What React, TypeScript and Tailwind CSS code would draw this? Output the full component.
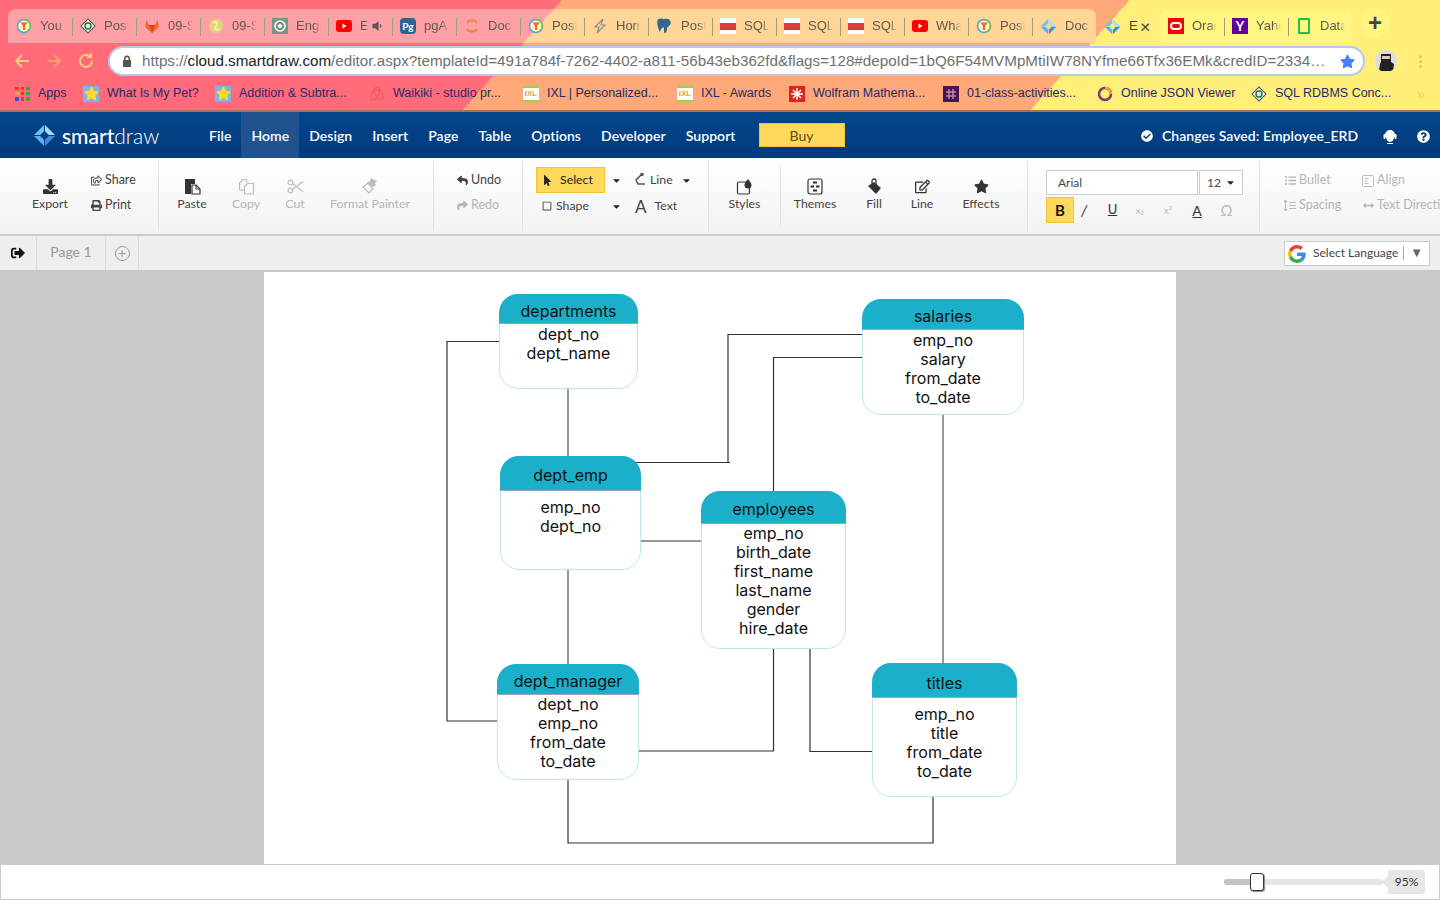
import React from 'react'
import {
  FaDownload, FaRegShareSquare, FaPrint, FaReply, FaShare,
  FaMousePointer, FaRegSquare, FaStar, FaRegEdit, FaCheckCircle, FaQuestionCircle,
  FaCaretDown, FaSignOutAlt, FaListUl, FaArrowsAltH, FaVolumeDown,
} from 'react-icons/fa'

function Fav({ kind }: { kind: string }) {
  if (kind === 'post') {
    return (
      <svg width="16" height="16" viewBox="0 0 16 16" className="shrink-0">
        <circle cx="8" cy="8" r="6.5" fill="#fff3c0" stroke="#4aa6d8" strokeWidth="1.5" />
        <path d="M8 1.500a6.500 6.500 0 0 1 6.500 6.500 6.500 6.500 0 0 1-3 5.500" fill="none" stroke="#7cc24a" strokeWidth="1.5" />
        <path d="M4.500 4.500h7L9 8v4H7V8z" fill="#f0663a" />
      </svg>
    )
  }
  if (kind === 'rdbms') {
    return (
      <svg width="16" height="16" viewBox="0 0 16 16" className="shrink-0">
        <rect x="3" y="3" width="10" height="10" transform="rotate(45 8 8)" fill="#e8f2e8" stroke="#44604a" />
        <circle cx="8" cy="8" r="3" fill="none" stroke="#2f6f46" strokeWidth="1.4" />
      </svg>
    )
  }
  if (kind === 'gitlab') {
    return (
      <svg width="16" height="16" viewBox="0 0 16 16" className="shrink-0">
        <path d="M8 15 1 9l1.500-7L5 7h6l2.500-5L15 9z" fill="#f0662a" />
        <path d="M8 15 5 7h6z" fill="#e2432a" />
      </svg>
    )
  }
  if (kind === 'gitlabFade') {
    return (
      <svg width="16" height="16" viewBox="0 0 16 16" className="shrink-0">
        <circle cx="8" cy="8" r="7" fill="#e3d47a" />
        <path d="M5 5c3-2 6 0 3 3s0 5 3 3" fill="none" stroke="#f5eeb0" strokeWidth="2" />
      </svg>
    )
  }
  if (kind === 'target') {
    return (
      <svg width="16" height="16" viewBox="0 0 16 16" className="shrink-0">
        <rect width="16" height="16" fill="#7b9484" />
        <circle cx="8" cy="8" r="5" fill="none" stroke="#fff" strokeWidth="1.5" />
        <circle cx="8" cy="8" r="2" fill="#fff" />
      </svg>
    )
  }
  if (kind === 'yt') {
    return (
      <svg width="16" height="16" viewBox="0 0 16 16" className="shrink-0">
        <rect y="2" width="16" height="12" rx="3" fill="#f00" />
        <path d="M6.500 5.500v5l4-2.500z" fill="#fff" />
      </svg>
    )
  }
  if (kind === 'pg') {
    return <span className="w-4 h-4 shrink-0 rounded-sm bg-[#2b6598] text-white text-[10px] leading-4 text-center font-bold">Pg</span>
  }
  if (kind === 'doc') {
    return (
      <svg width="16" height="16" viewBox="0 0 16 16" className="shrink-0">
        <path d="M3 5a6 6 0 0 1 10 0" fill="none" stroke="#f47b20" strokeWidth="1.500" />
        <path d="M3 11a6 6 0 0 0 10 0" fill="none" stroke="#f47b20" strokeWidth="1.500" />
      </svg>
    )
  }
  if (kind === 'bolt') {
    return (
      <svg width="16" height="16" viewBox="0 0 16 16" className="shrink-0">
        <path d="M11 1 3 9h4l-2 6 8-8H9z" fill="none" stroke="#8a8f8a" strokeWidth="1.200" />
      </svg>
    )
  }
  if (kind === 'elephant') {
    return (
      <svg width="18" height="18" viewBox="0 0 16 16" className="shrink-0 -ml-px">
        <path d="M2 4c0-3 4-3 6-2 3-1 6 0 6 3 0 2-2 3-3 4l-1 5H8V9C5 9 5 13 4 13 3 11 2 7 2 4z" fill="#336791" />
      </svg>
    )
  }
  if (kind === 'w3') {
    return (
      <span className="w-4 h-4 shrink-0 bg-white flex items-center justify-center">
        <span className="w-4 h-[7px] bg-[#e23b3b]" />
      </span>
    )
  }
  if (kind === 'sd') return <Logo size={17} />
  if (kind === 'oracle') {
    return (
      <span className="w-4 h-4 shrink-0 bg-[#f80000] flex items-center justify-center">
        <span className="w-3 h-2 rounded-full border-2 border-white" />
      </span>
    )
  }
  if (kind === 'yahoo') {
    return <span className="w-4 h-4 shrink-0 bg-[#5f01a0] text-white text-[13px] leading-4 text-center font-bold">Y</span>
  }
  if (kind === 'data') {
    return <span className="w-3 h-4 shrink-0 mx-0.5 border-2 border-[#22c04a] rounded-[1px]" />
  }
  return null
}

function Logo({ size }: { size: number }) {
  return (
    <svg width={size} height={size} viewBox="0 0 24 24" className="shrink-0">
      <path d="M11.500 1 1 11.500h6.500l4-4z" fill="#6cc4f4" />
      <path d="M12.500 1 23 11.500h-6.500l-4-4z" fill="#a4e0fa" />
      <path d="M1 12.500h6.500l4 4V23z" fill="#5ab0ea" />
      <path d="M23 12.500h-6.500l-4 4V23z" fill="#3a90d8" />
    </svg>
  )
}

const tabsA = [
  ['post', 'You'], ['rdbms', 'Post'], ['gitlab', '09-S'], ['gitlabFade', '09-S'], ['target', 'Engi'], ['yt', 'E'],
  ['pg', 'pgA'], ['doc', 'Doc'], ['post', 'Post'], ['bolt', 'Hom'], ['elephant', 'Post'], ['w3', 'SQL'],
  ['w3', 'SQL'], ['w3', 'SQL'], ['yt', 'Wha'], ['post', 'Post'], ['sd', 'Doc'],
]
const tabsB = [['oracle', 'Orac'], ['yahoo', 'Yaho'], ['data', 'Data']]

function Tab({ kind, label, sound, last }: { kind: string; label: string; sound?: boolean; last?: boolean }) {
  return (
    <div className="w-16 h-full flex items-center pl-2 relative">
      <Fav kind={kind} />
      <span className={`ml-2 ${sound ? 'w-[8px]' : 'w-[25px]'} overflow-hidden whitespace-nowrap text-[13px] text-[#5f5a50] font-['Liberation_Sans',sans-serif] [mask-image:linear-gradient(90deg,#000_70%,transparent)]`}>{label}</span>
      {sound && <FaVolumeDown className="text-[12px] text-[#555] absolute left-[43px]" />}
      {!last && <span className="absolute right-[-1px] top-[9px] bottom-[7px] w-px bg-[#a09c78]" />}
    </div>
  )
}

const bookmarks = [
  { w: 'w-[68px]', text: 'Apps', icon: 'apps' },
  { w: 'w-[132px]', text: 'What Is My Pet?', icon: 'star' },
  { w: 'w-[154px]', text: 'Addition & Subtra...', icon: 'star' },
  { w: 'w-[154px]', text: 'Waikiki - studio pr...', icon: 'air' },
  { w: 'w-[154px]', text: 'IXL | Personalized...', icon: 'ixl' },
  { w: 'w-[112px]', text: 'IXL - Awards', icon: 'ixl' },
  { w: 'w-[154px]', text: 'Wolfram Mathema...', icon: 'wolf' },
  { w: 'w-[154px]', text: '01-class-activities...', icon: 'slack' },
  { w: 'w-[154px]', text: 'Online JSON Viewer', icon: 'json' },
  { w: 'w-[154px]', text: 'SQL RDBMS Conc...', icon: 'rdbms' },
]

function BookmarkIcon({ icon }: { icon: string }) {
  if (icon === 'apps') {
    return (
      <span className="w-[15px] h-[14px] shrink-0 grid grid-cols-3 gap-[2px]">
        {['#e33', '#e33', '#3a3', '#ea3', '#e33', '#3a3', '#35d', '#e33', '#3a3'].map((c, i) => (
          <span key={i} style={{ backgroundColor: c }} />
        ))}
      </span>
    )
  }
  if (icon === 'star') {
    return (
      <span className="w-4 h-4 shrink-0 bg-[#7fb4e8] flex items-center justify-center">
        <FaStar className="text-[#ffd92e] text-[15px]" />
      </span>
    )
  }
  if (icon === 'air') {
    return (
      <svg width="16" height="18" viewBox="0 0 16 16" className="shrink-0">
        <path d="M8 11C6.500 9 5.500 7.500 5.500 6a2.500 2.500 0 0 1 5 0c0 1.500-1 3-2.500 5 1.500 2 4 3.500 5.500 2.500S14.500 10 12 5.500 9.500 1 8 1 6.500 1 4 5.500 1 12.500 2.500 13.500 6.500 13 8 11z" fill="none" stroke="#f0585f" strokeWidth="1.100" />
      </svg>
    )
  }
  if (icon === 'ixl') {
    return <span className="w-4 h-4 shrink-0 bg-white border-y-2 border-[#9ed13c] text-[#e6a31a] text-[8px] leading-3 font-bold text-center">IXL</span>
  }
  if (icon === 'wolf') {
    return (
      <span className="w-4 h-4 shrink-0 bg-[#e2211c] flex items-center justify-center">
        <svg width="12" height="12" viewBox="0 0 12 12">
          <path d="M6 0v12M0 6h12M2 2l8 8M10 2l-8 8" stroke="#fff" strokeWidth="1.500" />
        </svg>
      </span>
    )
  }
  if (icon === 'slack') {
    return (
      <span className="w-4 h-4 shrink-0 bg-[#4a154b] flex items-center justify-center">
        <svg width="12" height="12" viewBox="0 0 12 12">
          <path d="M4 1v10M8 1v10M1 4h10M1 8h10" stroke="#b58ab5" strokeWidth="1.500" />
        </svg>
      </span>
    )
  }
  if (icon === 'json') {
    return (
      <svg width="16" height="16" viewBox="0 0 16 16" className="shrink-0">
        <circle cx="8" cy="8" r="6" fill="none" stroke="#7a3b6e" strokeWidth="2.500" />
        <path d="M8 2a6 6 0 0 1 6 6" fill="none" stroke="#f0a030" strokeWidth="2.500" />
      </svg>
    )
  }
  return <Fav kind="rdbms" />
}

const navItems = ['File', 'Home', 'Design', 'Insert', 'Page', 'Table', 'Options', 'Developer', 'Support']

// ribbon icons that the icon packages don't have in this shape
function PasteIcon() {
  return (
    <svg width="17" height="17" viewBox="0 0 17 17">
      <path d="M1 1h10v5H7v10H1z" fill="#333" />
      <path d="M8 7h4l4 4v5H8z" fill="#fff" stroke="#333" strokeWidth="1.200" />
      <path d="M12 7v4h4" fill="none" stroke="#333" />
    </svg>
  )
}

function CopyIcon() {
  return (
    <svg width="17" height="17" viewBox="0 0 17 17" fill="none" stroke="#bdbdbd" strokeWidth="1.200">
      <path d="M1.500 12V5l3.500-3.500h3.500V5" />
      <path d="M1.500 12h5" />
      <path d="M6.500 16V8.500l3-3h6V16z" />
    </svg>
  )
}

function CutIcon() {
  return (
    <svg width="17" height="15" viewBox="0 0 17 15" fill="none" stroke="#bdbdbd" strokeWidth="1.200">
      <circle cx="3.500" cy="3.500" r="2.400" />
      <circle cx="3.500" cy="11.500" r="2.400" />
      <path d="M5.500 4.800 16 12.500M5.500 10.200 16 2.500" />
    </svg>
  )
}

function PainterIcon() {
  return (
    <svg width="17" height="16" viewBox="0 0 17 16">
      <path d="M1 9l5-4 5 6-4 4z" fill="none" stroke="#bdbdbd" strokeWidth="1.200" />
      <path d="M5 5l3-2 1-3 2 1 1 1 3 1-2 2 1 2-3 2z" fill="#bdbdbd" />
    </svg>
  )
}

function LineIcon() {
  return (
    <svg width="12" height="14" viewBox="0 0 12 14" fill="none" stroke="#555" strokeWidth="1.500">
      <path d="M8 1 2 7l2 4h7" />
      <circle cx="8" cy="1.500" r="1" fill="#555" />
    </svg>
  )
}

function StylesIcon() {
  return (
    <svg width="17" height="17" viewBox="0 0 17 17">
      <path d="M10 4H3a1.500 1.500 0 0 0-1.500 1.500v9A1.500 1.500 0 0 0 3 16h9a1.500 1.500 0 0 0 1.500-1.500V10" fill="none" stroke="#333" strokeWidth="1.200" />
      <path d="M12 1c1.500 2 3.500 4 3.500 6a3.500 3.500 0 0 1-7 0c0-2 2-4 3.500-6z" fill="#333" />
    </svg>
  )
}

function ThemesIcon() {
  return (
    <svg width="16" height="17" viewBox="0 0 16 17">
      <rect x="1" y="1" width="14" height="15" rx="2" fill="none" stroke="#333" strokeWidth="1.200" />
      <path d="M6 3.500h4v2H6zM3.500 7.500h3.500v2H3.500zM9 7.500h3.500v2H9zM6 11.500h4v2H6z" fill="#333" />
    </svg>
  )
}

function FillIcon() {
  return (
    <svg width="15" height="17" viewBox="0 0 15 17">
      <path d="M1 8l6-4 7 6-5 6z" fill="#333" />
      <path d="M5 7V3a2 2 0 0 1 4 0v4" fill="none" stroke="#333" strokeWidth="1.300" />
    </svg>
  )
}

function AlignIcon() {
  return (
    <svg width="12" height="12" viewBox="0 0 12 12" fill="none" stroke="#bdbdbd">
      <rect x="0.500" y="0.500" width="11" height="11" rx="1" />
      <path d="M2.500 3.500h4M2.500 6h3M2.500 8.500h4" />
    </svg>
  )
}

function SpacingIcon() {
  return (
    <svg width="12" height="11" viewBox="0 0 12 11" fill="none" stroke="#bdbdbd" strokeWidth="1.200">
      <path d="M1.500 0v11M0 2l1.500-2L3 2M0 9l1.500 2L3 9M5 2.500h7M5 5.500h7M5 8.500h7" />
    </svg>
  )
}

function HeadsetIcon() {
  return (
    <svg width="14" height="16" viewBox="0 0 14 16" fill="#fff">
      <path d="M2 7a5 5 0 0 1 10 0v2h-1.500V7a3.500 3.500 0 0 0-7 0v2H2z" />
      <ellipse cx="7" cy="8" rx="4.200" ry="6" />
      <rect x="0.500" y="6" width="2" height="5" rx="1" />
      <rect x="11.500" y="6" width="2" height="5" rx="1" />
      <path d="M4 15h6v1H4z" />
    </svg>
  )
}

function RibbonItem({ w, icon, label, off }: { w: string; icon: React.ReactNode; label: string; off?: boolean }) {
  return (
    <div className={`${w} flex flex-col items-center pt-[19px] ${off ? 'text-[#b5b5b5]' : 'text-[#444]'}`}>
      <span className="h-[18px] flex items-center text-[15px] text-[#333]">{icon}</span>
      <span className="mt-[1px] text-[12.3px] leading-4 whitespace-nowrap">{label}</span>
    </div>
  )
}

function SmallItem({ icon, label, off }: { icon: React.ReactNode; label: string; off?: boolean }) {
  return (
    <div className={`h-[25px] flex items-center gap-[3px] text-[12.5px] whitespace-nowrap ${off ? 'text-[#b5b5b5]' : 'text-[#444]'}`}>
      <span className="w-[12px] flex justify-center text-[11px]">{icon}</span>
      {label}
    </div>
  )
}

function Sep() {
  return <span className="w-px self-stretch my-[3px] bg-[#e2e2e2] shrink-0" />
}

const entities = [
  { name: 'departments', cols: ['dept_no', 'dept_name'], box: 'left-[235px] top-[22px] w-[139px] h-[95px]', head: 'h-[30px] pt-[4px]', pad: 'pt-[1px]' },
  { name: 'salaries', cols: ['emp_no', 'salary', 'from_date', 'to_date'], box: 'left-[598px] top-[27px] w-[162px] h-[116px]', head: 'h-[31px] pt-[3px]', pad: 'pt-[1px]' },
  { name: 'dept_emp', cols: ['emp_no', 'dept_no'], box: 'left-[236px] top-[184px] w-[141px] h-[114px]', head: 'h-[35px] pt-[4px]', pad: 'pt-[7px]' },
  { name: 'employees', cols: ['emp_no', 'birth_date', 'first_name', 'last_name', 'gender', 'hire_date'], box: 'left-[437px] top-[219px] w-[145px] h-[158px]', head: 'h-[33px] pt-[4px]', pad: 'pt-0' },
  { name: 'dept_manager', cols: ['dept_no', 'emp_no', 'from_date', 'to_date'], box: 'left-[233px] top-[392px] w-[142px] h-[116px]', head: 'h-[31px] pt-[3px]', pad: 'pt-0' },
  { name: 'titles', cols: ['emp_no', 'title', 'from_date', 'to_date'], box: 'left-[608px] top-[391px] w-[145px] h-[134px]', head: 'h-[35px] pt-[5px]', pad: 'pt-[7px]' },
]

function Entity({ name, cols, box, head, pad }: { name: string; cols: string[]; box: string; head: string; pad: string }) {
  return (
    <div className={`absolute ${box} rounded-[19px] border border-[#bfe6ee] bg-white font-['Inter',sans-serif] text-base text-center text-[#111]`}>
      <div className={`${head} rounded-t-[19px] bg-[#1cafc9] border-b border-[#9aa8ac] flex items-center justify-center -mx-px -mt-px`}>{name}</div>
      <div className={`${pad} leading-[19px]`}>
        {cols.map(c => (
          <div key={c}>{c}</div>
        ))}
      </div>
    </div>
  )
}

export default function App() {
  return (
    <div className="w-[1440px] h-[900px] overflow-hidden flex flex-col font-['Lato',sans-serif]">
      {/* browser frame */}
      <div className="h-[112px] shrink-0 border-b-2 border-[#a8705a] bg-[linear-gradient(132deg,#ff6b78_36.5%,#ffa878_36.5%,#ffa878_73.4%,#ffee78_73.4%)]">
        <div className="h-[43px] pt-[9px] flex items-stretch">
          <div className="ml-2 flex rounded-t-lg h-[34px] bg-[linear-gradient(132deg,#ff9fa6_48.8%,#ffd598_48.8%)]">
            {tabsA.map(([kind, label], i) => (
              <Tab key={i} kind={kind} label={label} sound={i === 5} last={i === 16} />
            ))}
          </div>
          <div className="w-16 h-[34px] flex items-center pl-2 relative">
            <Fav kind="sd" />
            <span className="ml-2 text-[13px] text-[#444] font-['Liberation_Sans',sans-serif]">E</span>
            <span className="absolute left-[44px] text-lg leading-none text-[#444]">×</span>
          </div>
          <div className="flex rounded-t-lg h-[34px] bg-[#fff580]">
            {tabsB.map(([kind, label], i) => (
              <Tab key={i} kind={kind} label={label} last={i === 2} />
            ))}
          </div>
          <div className="ml-2 mt-[-1px] w-[30px] h-[30px] rounded-full bg-[#fff580] flex items-center justify-center text-[24px] leading-none font-bold text-[#444] font-['Liberation_Sans',sans-serif]">+</div>
        </div>
        <div className="h-[36px] flex items-center">
          <div className="w-[108px] flex items-center pl-[13px] gap-[14px] text-[#ffce7a]">
            <svg width="18" height="18" viewBox="0 0 18 18" fill="none" stroke="currentColor" strokeWidth="2"><path d="M16 9H3M9 3 3 9l6 6" /></svg>
            <svg width="18" height="18" viewBox="0 0 18 18" fill="none" stroke="#ffa06e" strokeWidth="2"><path d="M2 9h13M9 3l6 6-6 6" /></svg>
            <svg width="18" height="18" viewBox="0 0 18 18" fill="none" stroke="currentColor" strokeWidth="2"><path d="M15 9a6 6 0 1 1-2-4.500M14 1v4h-4" /></svg>
          </div>
          <div className="w-[1257px] h-[30px] bg-white rounded-full border-2 border-[#b3c8ea] flex items-center pl-[12px] pr-2 font-['Liberation_Sans',sans-serif] text-[15.2px] text-[#6f6f6f]">
            <svg width="10" height="12" viewBox="0 0 10 12" className="shrink-0 mr-[10px]"><path d="M2 5V3.500a3 3 0 0 1 6 0V5h1v7H1V5zm1.500 0h3V3.500a1.500 1.500 0 0 0-3 0z" fill="#555" /></svg>
            <span className="whitespace-nowrap overflow-hidden w-[1188px]">
              https://<span className="text-[#222]">cloud.smartdraw.com</span>/editor.aspx?templateId=491a784f-7262-4402-a811-56b43eb362fd&amp;flags=128#depoId=1bQ6F54MVMpMtiIW78NYfme66Tfx36EMk&amp;credID=2334…
            </span>
            <FaStar className="ml-auto text-[#4a80f0] text-[15px] shrink-0" />
          </div>
          <div className="ml-[10px] w-[22px] h-[22px] rounded-full bg-[#dedede] flex items-center justify-center overflow-hidden">
            <svg width="16" height="20" viewBox="0 0 16 20">
              <path d="M3 3h10v8l3 2-1 7H1l1-7 1-2z" fill="#222" />
              <rect x="4" y="5" width="8" height="3" fill="#e8c8a8" />
            </svg>
          </div>
          <div className="ml-[22px] flex flex-col gap-[2px]">
            <span className="w-[3px] h-[3px] rounded-full bg-[#e3c75a]" />
            <span className="w-[3px] h-[3px] rounded-full bg-[#e3c75a]" />
            <span className="w-[3px] h-[3px] rounded-full bg-[#e3c75a]" />
          </div>
        </div>
        <div className="h-[29px] flex items-center pl-[15px] font-['Liberation_Sans',sans-serif] text-[12.5px] text-[#1d2a70]">
          {bookmarks.map(b => (
            <div key={b.text} className={`${b.w} flex items-center gap-2 whitespace-nowrap`}>
              <BookmarkIcon icon={b.icon} />
              {b.text}
            </div>
          ))}
          <span className="ml-[12px] text-[#e8cf68] text-sm">»</span>
        </div>
      </div>

      {/* app menu */}
      <div className="h-[46px] shrink-0 bg-[linear-gradient(180deg,#04468c,#023a7c)] flex items-stretch text-white text-sm font-semibold tracking-[0.05px]">
        <div className="w-[199px] flex items-center pl-[33px] gap-[6px] tracking-normal">
          <Logo size={23} />
          <span className="text-[21px] leading-none font-medium">smart<span className="font-light">draw</span></span>
        </div>
        {navItems.map(n => (
          <div key={n} className={`flex items-center px-2.5 pt-[2px] ${n === 'Home' ? 'bg-[#20528f]' : ''}`}>{n}</div>
        ))}
        <div className="ml-[13px] my-[11px] w-[86px] pt-[2px] bg-[#ffd95c] border border-[#f6c233] text-[#5a4a12] font-normal flex items-center justify-center">Buy</div>
        <div className="ml-auto flex items-center pt-[2px]">
          <FaCheckCircle className="text-[12px] mr-[9px]" />
          <span className="w-[221px]">Changes Saved: Employee_ERD</span>
          <HeadsetIcon />
          <FaQuestionCircle className="text-[13px] ml-[20px] mr-[10px]" />
        </div>
      </div>

      {/* ribbon */}
      <div className="h-[78px] shrink-0 bg-[linear-gradient(180deg,#ffffff,#f2f2f2)] border-b-2 border-[#c9c9c9] flex items-stretch overflow-hidden">
        <div className="w-[158px] flex shrink-0">
          <RibbonItem w="w-[100px]" icon={<FaDownload />} label="Export" />
          <div className="pt-[10px] -ml-[10px]">
            <SmallItem icon={<FaRegShareSquare />} label="Share" />
            <SmallItem icon={<FaPrint />} label="Print" />
          </div>
        </div>
        <Sep />
        <div className="w-[274px] flex shrink-0">
          <RibbonItem w="w-[66px]" icon={<PasteIcon />} label="Paste" />
          <RibbonItem w="w-[42px]" icon={<CopyIcon />} label="Copy" off />
          <RibbonItem w="w-[56px]" icon={<CutIcon />} label="Cut" off />
          <RibbonItem w="w-[94px]" icon={<PainterIcon />} label="Format Painter" off />
        </div>
        <Sep />
        <div className="w-[88px] pl-[22px] pt-[10px] shrink-0">
          <SmallItem icon={<FaReply />} label="Undo" />
          <SmallItem icon={<FaShare />} label="Redo" off />
        </div>
        <Sep />
        <div className="w-[185px] pl-[13px] pt-[9px] shrink-0 text-[12.3px] text-[#444]">
          <div className="h-[26px] flex items-center">
            <div className="w-[69px] h-[26px] bg-[#ffd95c] border border-[#f6c233] flex items-center pl-[5px] gap-[7px] text-[#222]">
              <FaMousePointer className="text-[11px]" />Select
            </div>
            <FaCaretDown className="ml-[6px] text-[11px] text-[#222]" />
            <span className="ml-[12px]"><LineIcon /></span>
            <span className="ml-[4px]">Line</span>
            <FaCaretDown className="ml-[8px] text-[11px] text-[#222]" />
          </div>
          <div className="h-[26px] flex items-center">
            <div className="w-[69px] flex items-center pl-[6px] gap-[4px]">
              <FaRegSquare className="text-[10px]" />Shape
            </div>
            <FaCaretDown className="ml-[6px] text-[11px] text-[#222]" />
            <span className="ml-[13px] text-[17px] leading-none">A</span>
            <span className="ml-[8px]">Text</span>
          </div>
        </div>
        <Sep />
        <div className="w-[318px] flex shrink-0">
          <RibbonItem w="w-[71px]" icon={<StylesIcon />} label="Styles" />
          <span className="w-px my-[7px] bg-[#e2e2e2]" />
          <RibbonItem w="w-[68px]" icon={<ThemesIcon />} label="Themes" />
          <RibbonItem w="w-[50px]" icon={<FillIcon />} label="Fill" />
          <RibbonItem w="w-[46px]" icon={<FaRegEdit />} label="Line" />
          <RibbonItem w="w-[72px]" icon={<FaStar />} label="Effects" />
        </div>
        <Sep />
        <div className="w-[231px] pl-[18px] pt-[12px] shrink-0">
          <div className="flex gap-px text-xs text-[#444]">
            <div className="w-[152px] h-[25px] bg-white border border-[#ccc] flex items-center pl-[11px]">Arial</div>
            <div className="w-[44px] h-[25px] bg-white border border-[#ccc] flex items-center pl-[7px]">
              12<FaCaretDown className="ml-auto mr-[6px] text-[11px] text-[#222]" />
            </div>
          </div>
          <div className="mt-[2px] flex items-center text-[#333]">
            <div className="w-[28px] h-[26px] bg-[#ffd95c] border border-[#f6c233] flex items-center justify-center text-[15px] font-bold text-[#111]">B</div>
            <span className="w-[28px] ml-[-3px] pl-[10px] text-[15px] italic">/</span>
            <span className="w-[27px] text-center text-[13px] underline">U</span>
            <span className="w-[28px] text-center text-[10px] text-[#bbb]">x₂</span>
            <span className="w-[28px] text-center text-[10px] text-[#bbb]">x²</span>
            <span className="w-[30px] text-center text-[14px] underline">A</span>
            <span className="w-[29px] text-center text-[15px] text-[#bbb]">Ω</span>
          </div>
        </div>
        <Sep />
        <div className="pl-[24px] pt-[10px] flex shrink-0">
          <div className="w-[78px]">
            <SmallItem icon={<FaListUl />} label="Bullet" off />
            <SmallItem icon={<SpacingIcon />} label="Spacing" off />
          </div>
          <div>
            <SmallItem icon={<AlignIcon />} label="Align" off />
            <SmallItem icon={<FaArrowsAltH />} label="Text Direction" off />
          </div>
        </div>
      </div>

      {/* page tabs */}
      <div className="h-[36px] shrink-0 bg-[#eeeeee] border-b-2 border-[#c9c9c9] flex items-stretch">
        <div className="w-[37px] flex items-center justify-center border-r border-[#dcdcdc]">
          <FaSignOutAlt className="text-[14px] text-[#111]" />
        </div>
        <div className="w-[69px] pb-[2px] flex items-center justify-center border-r border-[#dcdcdc] text-sm text-[#999]">Page 1</div>
        <div className="w-[33px] flex items-center justify-center border-r border-[#dcdcdc]">
          <span className="w-[15px] h-[15px] rounded-full border border-[#999] text-[#999] text-[14px] leading-[12px] text-center">+</span>
        </div>
        <div className="ml-auto mr-[10px] mt-[5px] mb-[4px] w-[146px] bg-white border border-[#ccc] flex items-center pl-[3px] pb-[2px] text-xs text-[#444]">
          <svg width="18" height="18" viewBox="0 0 48 48" className="shrink-0 mr-[7px] mt-[2px]">
            <path fill="#ea4335" d="M24 9.500c3.500 0 6.700 1.200 9.200 3.600l6.900-6.900C35.900 2.400 30.500 0 24 0 14.600 0 6.500 5.400 2.600 13.200l8 6.200C12.500 13.700 17.800 9.500 24 9.500z" />
            <path fill="#4285f4" d="M47 24.500c0-1.600-.1-3.100-.4-4.500H24v9h12.900c-.6 3-2.200 5.500-4.700 7.200l7.700 6c4.500-4.200 7.100-10.300 7.100-17.700z" />
            <path fill="#fbbc05" d="M10.600 28.600c-.5-1.500-.8-3-.8-4.600s.3-3.100.8-4.600l-8-6.200C.9 16.500 0 20.100 0 24s.9 7.500 2.600 10.800z" />
            <path fill="#34a853" d="M24 48c6.500 0 11.900-2.100 15.900-5.800l-7.700-6c-2.200 1.500-4.900 2.300-8.200 2.300-6.200 0-11.500-4.200-13.400-9.900l-8 6.200C6.500 42.600 14.600 48 24 48z" />
          </svg>
          Select Language
          <span className="ml-[5px] w-px h-[14px] bg-[#aaa]" />
          <span className="ml-[6px] text-[#666] text-[13px]">▼</span>
        </div>
      </div>

      {/* canvas */}
      <div className="flex-1 min-h-0 bg-[#c9c9c9] flex justify-center">
        <div className="relative w-[912px] h-full bg-white">
          <svg width="912" height="592" viewBox="264 272 912 592" fill="none" className="absolute inset-0">
            <g stroke="#333" strokeWidth="1.2">
              <path d="M499 341.500H447V721H498" />
              <path d="M634 462.500H730M728 462V334.500H863" />
              <path d="M863 357.500H773.500V491" />
              <path d="M773.500 649V751H638" />
              <path d="M810 649V751.500H873" />
              <path d="M568 780V843H933V797" />
            </g>
            <g stroke="#777" strokeWidth="1.500">
              <path d="M568 389V456M568 570V664M943 415V663M640 541H702" />
            </g>
          </svg>
          {entities.map(e => (
            <Entity key={e.name} {...e} />
          ))}
        </div>
      </div>

      {/* footer */}
      <div className="h-[36px] shrink-0 bg-white border border-[#c9c9c9] flex items-center justify-end pr-[14px]">
        <div className="relative w-[159px] h-[6px] bg-[#e6e6e6] rounded-full">
          <div className="w-[30px] h-full bg-[#c4c4c4] rounded-l-full" />
          <div className="absolute left-[26px] top-[-6px] w-[14px] h-[18px] bg-white border border-[#333] rounded-[3px] shadow-[1px_1px_1px_#888]" />
        </div>
        <div className="ml-[5px] w-[37px] h-[24px] bg-[#e6e6e6] rounded-r-sm flex items-center justify-center text-xs text-[#333] relative">
          <span className="absolute left-[-6px] top-[6px] border-y-[6px] border-r-[6px] border-y-transparent border-r-[#e6e6e6]" />
          95%
        </div>
      </div>
    </div>
  )
}
